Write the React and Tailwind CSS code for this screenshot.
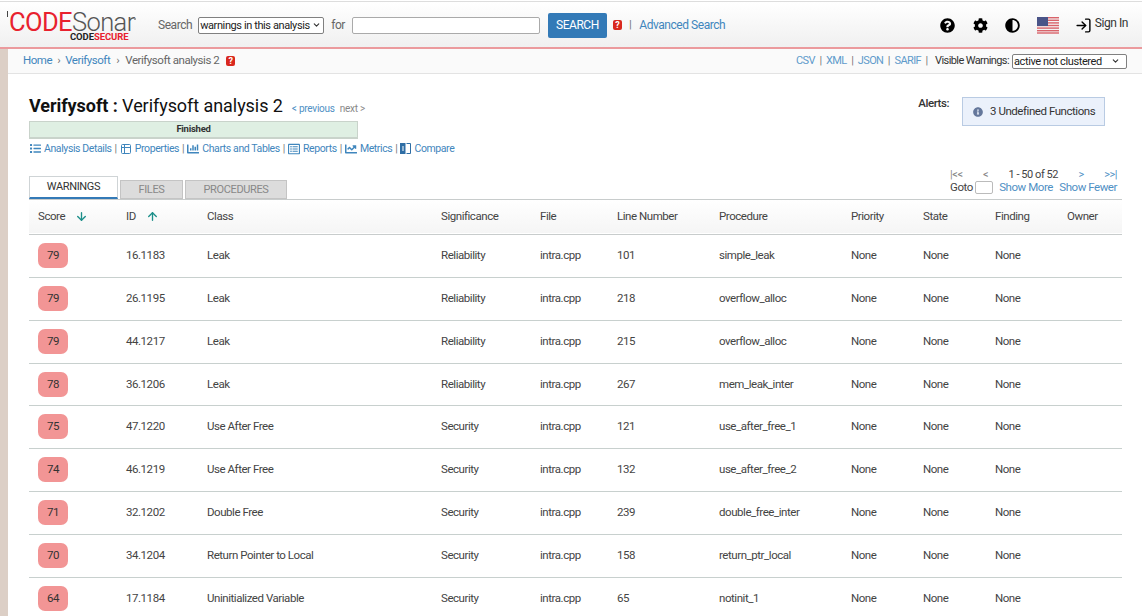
import React from "react";
import { FaQuestionCircle, FaCog, FaAdjust, FaInfoCircle, FaList, FaRegListAlt, FaChartBar, FaChartLine } from "react-icons/fa";
import { LuLogIn, LuArrowDown, LuArrowUp, LuTable2, LuChevronDown } from "react-icons/lu";

const rows = [
  [79, "16.1183", "Leak", "Reliability", "101", "simple_leak"],
  [79, "26.1195", "Leak", "Reliability", "218", "overflow_alloc"],
  [79, "44.1217", "Leak", "Reliability", "215", "overflow_alloc"],
  [78, "36.1206", "Leak", "Reliability", "267", "mem_leak_inter"],
  [75, "47.1220", "Use After Free", "Security", "121", "use_after_free_1"],
  [74, "46.1219", "Use After Free", "Security", "132", "use_after_free_2"],
  [71, "32.1202", "Double Free", "Security", "239", "double_free_inter"],
  [70, "34.1204", "Return Pointer to Local", "Security", "158", "return_ptr_local"],
  [64, "17.1184", "Uninitialized Variable", "Security", "65", "notinit_1"],
];

const Help = () => (
  <span className="inline-flex h-[10px] w-[9px] items-center justify-center rounded-[2px] bg-[#d9281e] text-[9px] font-bold leading-none tracking-normal text-white">?</span>
);

const Flag = () => (
  <svg width="22" height="17" viewBox="0 0 22 17" aria-hidden="true">
    <rect width="22" height="17" fill="#f4f4f4" />
    {[0, 2.6, 5.2, 7.8, 10.4, 13, 15.3].map((y) => (
      <rect key={y} y={y} width="22" height="1.4" fill="#d9636a" />
    ))}
    <rect width="11" height="9" fill="#4a5488" />
  </svg>
);

const CompareIcon = () => (
  <svg width="11" height="13" viewBox="0 0 11 13" aria-hidden="true" className="text-[#2f6ea5]">
    <rect x="0" y="1" width="5.5" height="11" fill="currentColor" />
    <path d="M6.5 1.5h4v10h-4" fill="none" stroke="currentColor" strokeWidth="1" />
    <path d="M3 4v5M8 5v5" stroke="#fff" strokeWidth="1" />
  </svg>
);

const Sep = () => <span className="text-[#777]">|</span>;

function NavLink({ icon, children, gap }) {
  return (
    <span className={`inline-flex items-center text-[#3f86bd] ${gap}`}>
      {icon}
      {children}
    </span>
  );
}

function PlainSelect({ label, box, chevron }) {
  return (
    <span className={`relative block shrink-0 ${box}`}>
      <select className="block size-full appearance-none rounded-[2px] border border-[#808080] bg-white pl-px text-[11px] leading-none tracking-[-0.4px] text-[#222]">
        <option>{label}</option>
      </select>
      <LuChevronDown strokeWidth={3} className={`pointer-events-none absolute top-1/2 size-[9px] -translate-y-1/2 text-[#333] ${chevron}`} />
    </span>
  );
}

export default function App() {
  return (
    <div className="h-[616px] w-[1142px] overflow-hidden bg-white font-['Roboto',sans-serif] text-[11.5px] tracking-[-0.45px] text-[#444]">
      <header className="mt-px flex h-[46px] items-center border-t border-[#dddddd] bg-gradient-to-b from-white to-[#f0f0f0] pr-[14px] pt-px">
        <div className="relative ml-[6px] h-[40px] w-[137px] shrink-0 leading-none">
          <span className="absolute left-[1px] top-[6px] h-[6px] w-px bg-[#444]" />
          <span className="absolute left-[3px] top-[8px] text-[25.5px] leading-[18px] tracking-[-0.6px] text-[#e8212e]">
            CODE<span className="font-light text-[#555]">Sonar</span>
          </span>
          <span className="absolute left-[128px] top-[13px] size-[2px] rounded-full bg-[#888]" />
          <span className="absolute left-[64px] top-[27px] text-[9.5px] font-bold tracking-[-0.1px] text-[#222]">
            CODE<span className="text-[#e8212e]">SECURE</span>
          </span>
        </div>
        <span className="ml-[15px] text-[12px] text-[#666]">Search</span>
        <span className="ml-[6px]"><PlainSelect label="warnings in this analysis" box="h-[17px] w-[126px]" chevron="right-[3px]" /></span>
        <span className="ml-[7px] text-[12px] text-[#666]">for</span>
        <input className="ml-[7px] h-[17px] w-[188px] rounded-[2px] border border-[#aaa] bg-white" />
        <button className="ml-[8px] h-[25px] w-[59px] rounded-[2px] bg-[#337ab7] text-[12px] text-white">SEARCH</button>
        <span className="ml-[6px] flex"><Help /></span>
        <span className="ml-[7px] text-[#777]">|</span>
        <span className="ml-[8px] text-[12px] text-[#3f86bd]">Advanced Search</span>
        <div className="ml-auto flex items-center">
          <FaQuestionCircle className="size-[15px] text-black" />
          <FaCog className="ml-[18px] size-[15px] text-black" />
          <FaAdjust className="ml-[17px] size-[15px] text-black" />
          <span className="ml-[17px] flex"><Flag /></span>
          <LuLogIn className="ml-[16px] size-[17px] text-black" />
          <span className="ml-[3px] -translate-y-[2px] text-[12px] text-[#333]">Sign In</span>
        </div>
      </header>
      <div className="h-[2px] bg-[#eb9a9d]" />
      <div className="flex h-[568px]">
        <div className="w-[8px] shrink-0 bg-[#dccfc6]" />
        <main className="min-w-0 flex-1">
          <nav className="flex h-[25px] items-center border-b border-[#e3e3e3] bg-[#fafafa] pl-[15px] pr-[15px]">
            <span className="text-[#3f86bd]">Home</span>
            <span className="mx-[5px] text-[#777]">›</span>
            <span className="text-[#3f86bd]">Verifysoft</span>
            <span className="mx-[6px] text-[#777]">›</span>
            <span className="text-[#666]">Verifysoft analysis 2</span>
            <span className="ml-[7px] flex"><Help /></span>
            <div className="ml-auto flex items-center text-[11px] tracking-[-0.6px]">
              <span className="text-[#5f9bcb]">CSV</span>
              <span className="mx-[4.5px]"><Sep /></span>
              <span className="text-[#5f9bcb]">XML</span>
              <span className="mx-[4.5px]"><Sep /></span>
              <span className="text-[#5f9bcb]">JSON</span>
              <span className="mx-[4.5px]"><Sep /></span>
              <span className="text-[#5f9bcb]">SARIF</span>
              <span className="mx-[4.5px]"><Sep /></span>
              <span className="ml-[3px] text-[#333]">Visible Warnings:</span>
              <span className="ml-[3px]"><PlainSelect label="active not clustered" box="h-[15px] w-[115px]" chevron="right-[7px]" /></span>
            </div>
          </nav>
          <section className="pl-[21px] pr-[20px]">
            <div className="flex justify-between">
              <div>
                <div className="flex h-[44px] items-end">
                  <h1 className="text-[18px] leading-[24px] tracking-[-0.06px] text-[#111]"><b>Verifysoft :</b> Verifysoft analysis 2</h1>
                  <span className="ml-[9px] mb-[2px] text-[10px] tracking-[-0.25px] text-[#4f90c4]">&lt; previous</span>
                  <span className="ml-[5px] mb-[2px] text-[10px] tracking-[-0.25px] text-[#888]">next &gt;</span>
                </div>
                <div className="mt-[3px] flex h-[18px] w-[329px] items-center justify-center border border-b-2 border-[#c9d3cb] bg-[#dfefe3] text-[9.5px] font-bold tracking-[-0.25px] text-[#333]">Finished</div>
                <div className="mt-[2px] flex items-center text-[10.5px] tracking-[-0.4px]">
                  <NavLink gap="gap-[3px] ml-px" icon={<FaList className="size-[11px]" />}>Analysis Details</NavLink>
                  <span className="mx-[3px]"><Sep /></span>
                  <NavLink gap="gap-[3px]" icon={<LuTable2 className="size-[12px]" />}>Properties</NavLink>
                  <span className="mx-[3px]"><Sep /></span>
                  <NavLink gap="gap-[3px]" icon={<FaChartBar className="size-[12px]" />}>Charts and Tables</NavLink>
                  <span className="mx-[3px]"><Sep /></span>
                  <NavLink gap="gap-[3px]" icon={<FaRegListAlt className="size-[12px]" />}>Reports</NavLink>
                  <span className="mx-[3px]"><Sep /></span>
                  <NavLink gap="gap-[3px]" icon={<FaChartLine className="size-[12px]" />}>Metrics</NavLink>
                  <span className="mx-[3px]"><Sep /></span>
                  <NavLink gap="gap-[3px]" icon={<CompareIcon />}>Compare</NavLink>
                </div>
              </div>
              <div className="mr-[17px] mt-[23px] flex items-start">
                <span className="-mt-[2px] font-medium text-[#333]">Alerts:</span>
                <div className="ml-[13px] flex h-[29px] w-[143px] shrink-0 items-center whitespace-nowrap border border-[#b9cbe3] bg-[#ebf1fb] pl-[10px] pt-px text-[#333]">
                  <FaInfoCircle className="size-[10px] text-[#64779b]" />
                  <span className="ml-[7px]">3 Undefined Functions</span>
                </div>
              </div>
            </div>
            <div className="mt-[15px] flex h-[27px] items-end justify-between">
              <div className="flex items-end">
                <div className="flex h-[23px] w-[89px] items-center justify-center border border-b-2 border-[#cfd4d6] border-b-[#337ab7] bg-white text-[11px] tracking-[-0.35px] text-[#333]">WARNINGS</div>
                <div className="ml-[2px] flex h-[19px] w-[63px] items-center justify-center border border-[#c4c4c4] bg-[#dcdcdc] pt-px text-[11px] tracking-[-0.35px] text-[#888]">FILES</div>
                <div className="ml-[2px] flex h-[19px] w-[102px] items-center justify-center border border-[#c4c4c4] bg-[#dcdcdc] pt-px text-[11px] tracking-[-0.35px] text-[#888]">PROCEDURES</div>
              </div>
              <div className="mb-[5px] mr-[5px] w-[167px] text-[11.5px] leading-[13px]">
                <div className="flex justify-between text-[11px] text-[#888]">
                  <span>|&lt;&lt;</span><span>&lt;</span>
                  <span className="text-[#444]">1 - 50 of 52</span>
                  <span className="text-[#4f90c4]">&gt;</span><span className="text-[#4f90c4]">&gt;&gt;|</span>
                </div>
                <div className="flex items-center justify-between whitespace-nowrap">
                  <span className="flex items-center">Goto<span className="ml-[2px] h-[13px] w-[18px] rounded-[2px] border border-[#bbb] bg-white" /></span>
                  <span className="text-[#4f90c4]">Show More</span>
                  <span className="text-[#4f90c4]">Show Fewer</span>
                </div>
              </div>
            </div>
            <table className="w-[1093px] table-fixed border-collapse text-left text-[#444]">
              <colgroup>
                {[88, 81, 234, 99, 77, 102, 132, 72, 72, 72, 64].map((w, i) => <col key={i} style={{ width: w }} />)}
              </colgroup>
              <thead>
                <tr className="h-[35px] border-y border-y-[#c8cccc] bg-gradient-to-b from-white to-[#f5f5f5] font-normal">
                  <th className="pl-[9px] font-normal"><span className="inline-flex items-center">Score<LuArrowDown strokeWidth={2.5} className="ml-[10px] size-[13px] text-[#1c8f8a]" /></span></th>
                  <th className="pl-[9px] font-normal"><span className="inline-flex items-center">ID<LuArrowUp strokeWidth={2.5} className="ml-[10px] size-[13px] text-[#1c8f8a]" /></span></th>
                  {["Class", "Significance", "File", "Line Number", "Procedure", "Priority", "State", "Finding", "Owner"].map((h) => (
                    <th key={h} className="pl-[9px] font-normal">{h}</th>
                  ))}
                </tr>
              </thead>
              <tbody>
                {rows.map((r, i) => (
                  <tr key={i} className={i === 3 ? "h-[42px] border-b border-[#c8d0ce]" : "h-[43px] border-b border-[#c8d0ce]"}>
                    <td className="pl-[9px]"><span className="flex h-[25px] w-[30px] items-center justify-center rounded-[7px] bg-[#f29595] text-[#333]">{r[0]}</span></td>
                    <td className="pl-[9px]">{r[1]}</td>
                    <td className="pl-[9px]">{r[2]}</td>
                    <td className="pl-[9px]">{r[3]}</td>
                    <td className="pl-[9px]">intra.cpp</td>
                    <td className="pl-[9px]">{r[4]}</td>
                    <td className="pl-[9px]">{r[5]}</td>
                    <td className="pl-[9px]">None</td>
                    <td className="pl-[9px]">None</td>
                    <td className="pl-[9px]">None</td>
                    <td className="pl-[9px]" />
                  </tr>
                ))}
              </tbody>
            </table>
          </section>
        </main>
      </div>
    </div>
  );
}
